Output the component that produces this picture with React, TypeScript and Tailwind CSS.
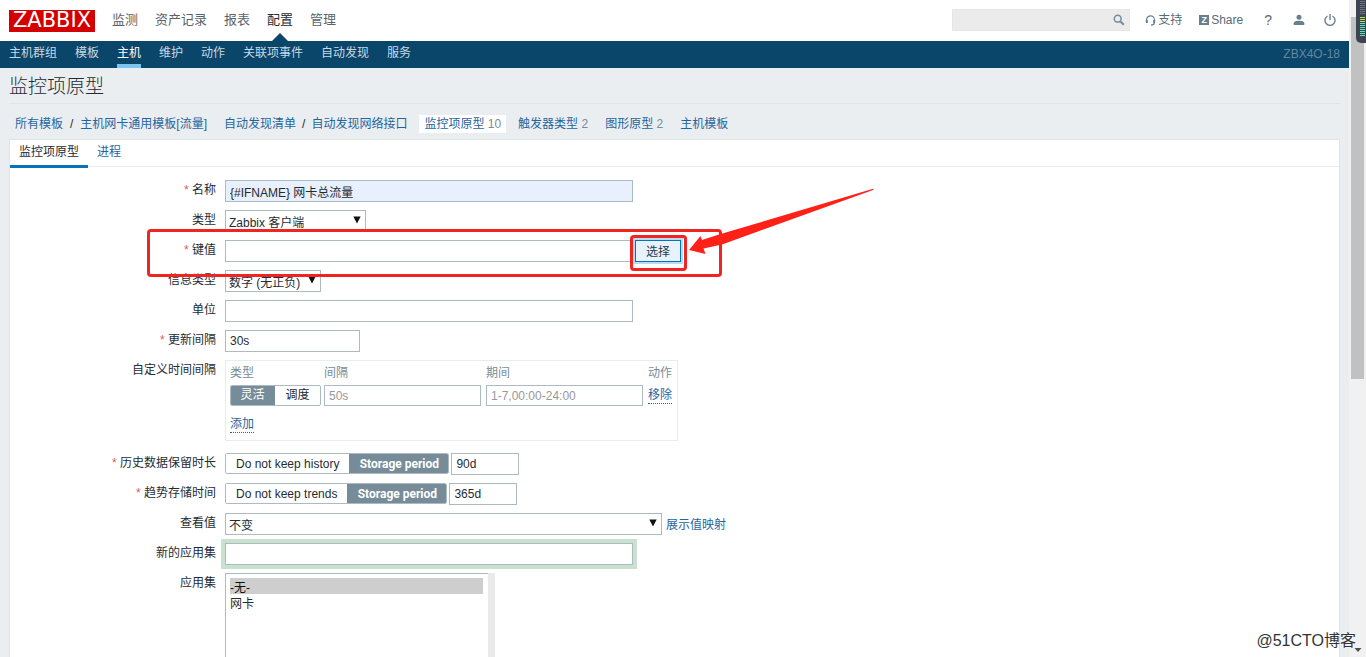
import React from "react";

const CJK = "font-['Liberation_Sans','Noto_Sans_CJK_SC',sans-serif]";

function Caret() {
  return (
    <svg className="pointer-events-none absolute right-[5px] top-1.5 h-2 w-2" viewBox="0 0 8 8" aria-hidden="true">
      <path d="M0.3 0.5h7.4L4 7.5z" fill="#111" />
    </svg>
  );
}

function Select({ id, options, width }: { id: string; options: string[]; width: string }) {
  return (
    <div className={`relative ${width}`}>
      <select
        id={id}
        className="block h-[22px] w-full appearance-none border border-[#acbbc2] bg-white pl-[3px] pt-1 text-xs leading-4 text-[#1f2c33]"
      >
        {options.map((o) => (
          <option key={o}>{o}</option>
        ))}
      </select>
      <Caret />
    </div>
  );
}

function TextBox({
  id,
  value,
  placeholder,
  label,
  className,
}: {
  id: string;
  value?: string;
  placeholder?: string;
  label?: string;
  className: string;
}) {
  return (
    <input
      id={id}
      type="text"
      aria-label={label}
      defaultValue={value}
      placeholder={placeholder}
      className={`block border border-[#acbbc2] px-1 text-xs leading-4 text-[#1f2c33] placeholder:text-[#999] ${className}`}
    />
  );
}

function Row({
  id,
  label,
  required,
  children,
}: {
  id: string;
  label: string;
  required?: boolean;
  children: React.ReactNode;
}) {
  return (
    <div className="flex gap-[9px]">
      <label htmlFor={id} className="w-[206px] shrink-0 text-right leading-5">
        {required && <span className="text-[#e45959]">* </span>}
        {label}
      </label>
      <div className="flex min-w-0">{children}</div>
    </div>
  );
}

function Segmented({ name, options, selected }: { name: string; options: string[]; selected: number }) {
  return (
    <div className="flex h-[21px] overflow-hidden rounded-xs border border-[#acbbc2]">
      {options.map((o, i) => (
        <label
          key={o}
          className={
            i === selected
              ? "-mr-px w-[100px] bg-[#768d99] text-center font-['Roboto',sans-serif] font-bold leading-5 text-white"
              : "bg-white px-2.5 leading-5"
          }
        >
          <input type="radio" name={name} defaultChecked={i === selected} className="sr-only" />
          {o}
        </label>
      ))}
    </div>
  );
}

function MainNav() {
  const items = ["监测", "资产记录", "报表", "配置", "管理"];
  return (
    <nav className="flex h-full gap-[17px] text-[13px] text-[#5a6468]">
      {items.map((t) => (
        <a
          key={t}
          href="#"
          className={
            t === "配置"
              ? "relative flex h-full items-center pb-px text-[#1f2c33]"
              : "flex h-full items-center pb-px"
          }
        >
          {t}
          {t === "配置" && (
            <span className="absolute bottom-0 left-1/2 -translate-x-1/2 border-x-8 border-b-8 border-x-transparent border-b-[#0a466a]" />
          )}
        </a>
      ))}
    </nav>
  );
}

function Header() {
  return (
    <header className="flex h-[41px] items-center justify-between bg-white pl-[9px] pr-[5px]">
      <div className="flex h-full items-center gap-[17px]">
        <a
          href="#"
          className="flex h-[22px] w-[86px] items-center justify-center bg-[#d40000] font-['DejaVu_Sans',sans-serif] text-[21px] leading-none text-white"
        >
          ZABBIX
        </a>
        <MainNav />
      </div>
      <div className="flex items-center gap-[15px] pb-px text-xs text-[#5a6b75]">
        <div className="relative">
          <input
            type="search"
            aria-label="搜索"
            className="block h-[22px] w-[178px] border border-[#e6e6e6] bg-[#ebebeb] px-1"
          />
          <svg className="absolute right-[5px] top-[5px] h-3 w-3" viewBox="0 0 12 12" fill="none" stroke="#768d99" aria-hidden="true">
            <circle cx="4.7" cy="4.7" r="3.4" strokeWidth="1.5" />
            <path d="M7.2 7.2l3.6 3.6" strokeWidth="2" />
          </svg>
        </div>
        <a href="#" className="flex items-center gap-0.5">
          <svg className="h-[11px] w-[11px]" viewBox="0 0 11 11" fill="none" stroke="#68808d" aria-hidden="true">
            <path d="M1.6 6V4.8a3.9 3.9 0 0 1 7.8 0V6M9.3 7.5c0 1.8-1.3 2.6-3.3 2.6" strokeWidth="1.2" />
            <path d="M1.8 5v3M9.2 5v3" strokeWidth="2" />
          </svg>
          支持
        </a>
        <a href="#" className="ml-0.5 flex items-center gap-0.5">
          <span className="flex h-2.5 w-2.5 items-center justify-center bg-[#68808d] text-[9px] font-bold leading-none text-white">
            Z
          </span>
          Share
        </a>
        <a href="#" className="ml-1.5 text-sm">
          ?
        </a>
        <a href="#" aria-label="用户" className="ml-1.5">
          <svg className="h-3 w-3" viewBox="0 0 12 12" fill="#68808d" aria-hidden="true">
            <circle cx="6" cy="3.3" r="2.5" />
            <path d="M0.7 11V9.3C0.7 7.5 3.5 6.8 6 6.8s5.3.7 5.3 2.5V11z" />
          </svg>
        </a>
        <a href="#" aria-label="退出" className="ml-1 pr-2">
          <svg className="h-3 w-3" viewBox="0 0 12 12" fill="none" stroke="#68808d" strokeWidth="1.4" aria-hidden="true">
            <path d="M3.5 2A5 5 0 1 0 8.5 2M6 0v6" />
          </svg>
        </a>
      </div>
    </header>
  );
}

function SubNav() {
  const items = ["主机群组", "模板", "主机", "维护", "动作", "关联项事件", "自动发现", "服务"];
  return (
    <nav className="flex h-[27px] justify-between bg-[#0a466a] px-[9px] text-[#c7d9e4]">
      <div className="flex gap-[18px]">
        {items.map((t) => (
          <a
            key={t}
            href="#"
            className={
              t === "主机"
                ? "border-b-4 border-[#7fc4ee] leading-6 text-white"
                : "leading-6"
            }
          >
            {t}
          </a>
        ))}
      </div>
      <span className="leading-[26px] text-[#6487a0]">ZBX4O-18</span>
    </nav>
  );
}

function Crumbs() {
  const link = "text-[#1f65a0]";
  return (
    <div className="flex h-[35px] items-center pl-1.5 pt-1 leading-[18px] text-[#768d99]">
      <a href="#" className={link}>所有模板</a>
      <span className="px-[7px] text-[#1f2c33]">/</span>
      <a href="#" className={link}>主机网卡通用模板[流量]</a>
      <a href="#" className={`ml-[17px] ${link}`}>自动发现清单</a>
      <span className="px-1.5 text-[#1f2c33]">/</span>
      <a href="#" className={link}>自动发现网络接口</a>
      <span className="ml-3 bg-white px-[5px]">
        <a href="#" className={link}>监控项原型</a> 10
      </span>
      <span className="ml-3">
        <a href="#" className={link}>触发器类型</a> 2
      </span>
      <span className="ml-[17px]">
        <a href="#" className={link}>图形原型</a> 2
      </span>
      <a href="#" className={`ml-[17px] ${link}`}>主机模板</a>
    </div>
  );
}

function Intervals() {
  const dotted = "border-b border-dotted border-[#1f65a0] leading-4 text-[#1f65a0]";
  return (
    <div className="mb-1 h-[81px] w-[453px] border border-[#e8ecee] px-1 pt-0.5">
      <table className="w-full border-collapse text-left">
        <thead>
          <tr className="h-5 text-[#768d99]">
            <th className="w-[94px] font-normal">类型</th>
            <th className="w-[162px] font-normal">间隔</th>
            <th className="w-[162px] font-normal">期间</th>
            <th className="font-normal">动作</th>
          </tr>
        </thead>
        <tbody>
          <tr className="h-[25px]">
            <td>
              <div className="flex h-[21px] w-[91px] overflow-hidden rounded-xs border border-[#acbbc2] text-center leading-[19px]">
                <label className="-ml-px flex-1 bg-[#768d99] text-white">
                  <input type="radio" name="flex" defaultChecked className="sr-only" />
                  灵活
                </label>
                <label className="flex-1">
                  <input type="radio" name="flex" className="sr-only" />
                  调度
                </label>
              </div>
            </td>
            <td>
              <TextBox id="delay" label="间隔" placeholder="50s" className="h-[21px] w-[157px]" />
            </td>
            <td>
              <TextBox id="period" label="期间" placeholder="1-7,00:00-24:00" className="h-[21px] w-[157px]" />
            </td>
            <td>
              <button type="button" className={dotted}>移除</button>
            </td>
          </tr>
        </tbody>
      </table>
      <button type="button" className={`mt-2 block ${dotted}`}>添加</button>
    </div>
  );
}

function Annotations() {
  return (
    <div className="pointer-events-none">
      <div className="absolute left-[137px] top-[62px] h-[48px] w-[575px] rounded-sm border-[3px] border-[#f02420]" />
      <div className="absolute left-[620px] top-[68px] h-[36px] w-[57px] rounded-sm border-[3px] border-[#f02420]" />
      <svg className="absolute left-[679px] top-[21px] h-[68px] w-[186px]" viewBox="0 0 186 68" aria-hidden="true">
        <path d="M185 0.5L184 2L33 56.5L14.5 60.5L16.5 66L0 62L11.5 48L13 52L30 46.5z" fill="#ff2018" />
      </svg>
    </div>
  );
}

function PrototypeForm() {
  return (
    <form className="relative flex flex-col gap-2 pt-[13px]">
      <Row id="name" label="名称" required>
        <TextBox id="name" value="{#IFNAME} 网卡总流量" className="h-[22px] w-[408px] bg-[#e8f0fe]" />
      </Row>
      <Row id="type" label="类型">
        <Select id="type" options={["Zabbix 客户端"]} width="w-[141px]" />
      </Row>
      <Row id="key" label="键值" required>
        <TextBox id="key" className="h-[22px] w-[408px]" />
        <button
          type="button"
          className="ml-0.5 h-[22px] w-[46px] border border-[#0275b8] bg-[#e8f2fb] pt-px text-[#1f3b50] shadow-[0_0_0_2px_#b9dcf0]"
        >
          选择
        </button>
      </Row>
      <Row id="value-type" label="信息类型">
        <Select id="value-type" options={["数字 (无正负)"]} width="w-24" />
      </Row>
      <Row id="units" label="单位">
        <TextBox id="units" className="h-[22px] w-[408px]" />
      </Row>
      <Row id="update" label="更新间隔" required>
        <TextBox id="update" value="30s" className="h-[22px] w-[135px]" />
      </Row>
      <Row id="delay" label="自定义时间间隔">
        <Intervals />
      </Row>
      <Row id="history" label="历史数据保留时长" required>
        <Segmented name="history-mode" options={["Do not keep history", "Storage period"]} selected={1} />
        <TextBox id="history" value="90d" className="ml-0.5 h-[22px] w-[68px]" />
      </Row>
      <Row id="trends" label="趋势存储时间" required>
        <Segmented name="trends-mode" options={["Do not keep trends", "Storage period"]} selected={1} />
        <TextBox id="trends" value="365d" className="ml-0.5 h-[22px] w-[68px]" />
      </Row>
      <Row id="valuemap" label="查看值">
        <Select id="valuemap" options={["不变"]} width="w-[437px]" />
        <a href="#" className="ml-1 pt-0.5 leading-5 text-[#1f65a0]">
          展示值映射
        </a>
      </Row>
      <Row id="new-app" label="新的应用集">
        <TextBox id="new-app" className="h-[22px] w-[408px] shadow-[0_0_0_4px_#c8e2ce]" />
      </Row>
      <Row id="apps" label="应用集">
        <select
          id="apps"
          multiple
          defaultValue={["none"]}
          className="h-[120px] w-[263px] overflow-hidden border border-r-0 border-[#acbbc2] py-1 pl-1 pr-[5px] text-xs text-[#1f2c33]"
        >
          <option value="none" className="h-4 p-0 leading-4">-无-</option>
          <option value="nic" className="h-4 p-0 leading-4">网卡</option>
        </select>
        <div className="w-[7px] bg-[#eaeaea]" />
      </Row>
      <Annotations />
    </form>
  );
}

function Scrollbar() {
  return (
    <aside className="relative w-[17px] shrink-0 bg-[#f1f1f1]">
      <div className="ml-0.5 mt-[17px] h-[362px] w-[13px] bg-[#c1c1c1]" />
      <svg className="absolute bottom-1 right-1 h-1.5 w-2" viewBox="0 0 8 6" aria-hidden="true">
        <path d="M0.5 1h7L4 5z" fill="#505050" />
      </svg>
      <svg className="absolute right-0 top-0 h-[43px] w-2.5" viewBox="0 0 10 43" aria-hidden="true">
        <path d="M0 0h10v43H5a5 5 0 0 1-5-5z" fill="#3d4350" />
        <path d="M4 1.5h5M4 3.5h5M4 5.5h5M4 7.5h5M4 9.5h5M4 11.5h5M4 13.5h5" stroke="#6b7380" />
        <path d="M4 17.5h5M4 19.5h5M4 21.5h5" stroke="#b8e060" />
        <path d="M4 23.5h5M4 25.5h5M4 27.5h5M4 29.5h5M4 31.5h5M4 33.5h5M4 35.5h5" stroke="#5fe0b8" />
      </svg>
    </aside>
  );
}

export default function App() {
  return (
    <div className={`relative flex h-screen overflow-hidden bg-[#ebeef0] text-xs text-[#1f2c33] ${CJK}`}>
      <div className="flex min-w-0 flex-1 flex-col">
        <Header />
        <SubNav />
        <main className="flex min-h-0 flex-1 flex-col pl-[9px] pr-[9px]">
          <h1 className="h-9 shrink-0 border-b border-[#dfe4e7] text-[19px] font-light leading-[38px]">监控项原型</h1>
          <Crumbs />
          <section className="min-h-0 flex-1 overflow-hidden border border-b-0 border-[#dfe4e7] bg-white">
            <div className="flex h-[27px] border-b border-[#ebeef0]">
              <a href="#" className="h-7 border-b-[3px] border-[#0275b8] px-[9px] leading-6">
                监控项原型
              </a>
              <a href="#" className="px-[9px] leading-6 text-[#1f65a0]">
                进程
              </a>
            </div>
            <PrototypeForm />
          </section>
        </main>
      </div>
      <Scrollbar />
      <div className="absolute bottom-1.5 right-2.5 text-base leading-5 text-[#333] [text-shadow:0_0_2px_#fff]">
        @51CTO博客
      </div>
    </div>
  );
}
